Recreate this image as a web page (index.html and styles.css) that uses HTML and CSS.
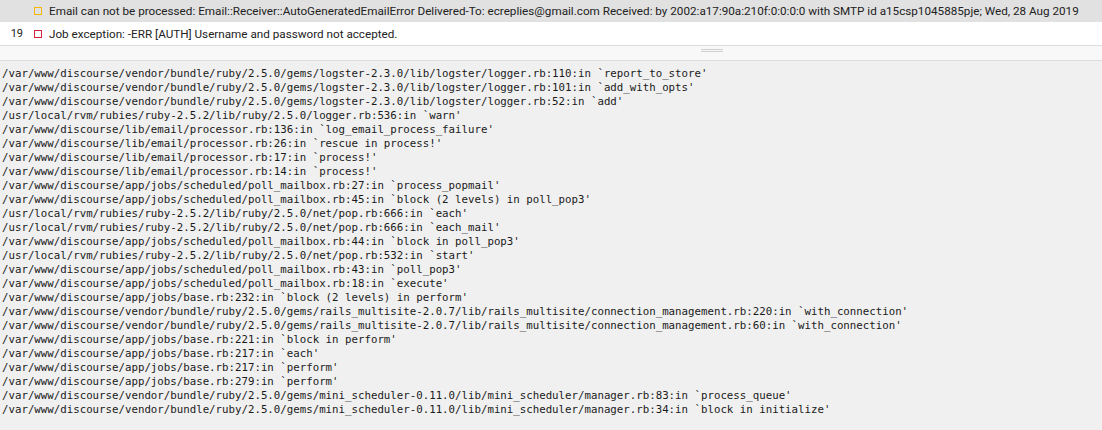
FILE: index.html
```html
<!DOCTYPE html>
<html>
<head>
<meta charset="utf-8">
<link rel="stylesheet" href="styles.css">
</head>
<body>
<div class="log-list">
  <div class="row selected">
    <span class="num"></span>
    <span class="sev warn"></span>
    <span class="msg">Email can not be processed: Email::Receiver::AutoGeneratedEmailError Delivered-To: ecreplies@gmail.com Received: by 2002:a17:90a:210f:0:0:0:0 with SMTP id a15csp1045885pje; Wed, 28 Aug 2019</span>
  </div>
  <div class="row">
    <span class="num">19</span>
    <span class="sev err"></span>
    <span class="msg">Job exception: -ERR [AUTH] Username and password not accepted.</span>
  </div>
</div>
<div class="divider"><span class="grip"></span></div>
<pre class="trace">/var/www/discourse/vendor/bundle/ruby/2.5.0/gems/logster-2.3.0/lib/logster/logger.rb:110:in `report_to_store'
/var/www/discourse/vendor/bundle/ruby/2.5.0/gems/logster-2.3.0/lib/logster/logger.rb:101:in `add_with_opts'
/var/www/discourse/vendor/bundle/ruby/2.5.0/gems/logster-2.3.0/lib/logster/logger.rb:52:in `add'
/usr/local/rvm/rubies/ruby-2.5.2/lib/ruby/2.5.0/logger.rb:536:in `warn'
/var/www/discourse/lib/email/processor.rb:136:in `log_email_process_failure'
/var/www/discourse/lib/email/processor.rb:26:in `rescue in process!'
/var/www/discourse/lib/email/processor.rb:17:in `process!'
/var/www/discourse/lib/email/processor.rb:14:in `process!'
/var/www/discourse/app/jobs/scheduled/poll_mailbox.rb:27:in `process_popmail'
/var/www/discourse/app/jobs/scheduled/poll_mailbox.rb:45:in `block (2 levels) in poll_pop3'
/usr/local/rvm/rubies/ruby-2.5.2/lib/ruby/2.5.0/net/pop.rb:666:in `each'
/usr/local/rvm/rubies/ruby-2.5.2/lib/ruby/2.5.0/net/pop.rb:666:in `each_mail'
/var/www/discourse/app/jobs/scheduled/poll_mailbox.rb:44:in `block in poll_pop3'
/usr/local/rvm/rubies/ruby-2.5.2/lib/ruby/2.5.0/net/pop.rb:532:in `start'
/var/www/discourse/app/jobs/scheduled/poll_mailbox.rb:43:in `poll_pop3'
/var/www/discourse/app/jobs/scheduled/poll_mailbox.rb:18:in `execute'
/var/www/discourse/app/jobs/base.rb:232:in `block (2 levels) in perform'
/var/www/discourse/vendor/bundle/ruby/2.5.0/gems/rails_multisite-2.0.7/lib/rails_multisite/connection_management.rb:220:in `with_connection'
/var/www/discourse/vendor/bundle/ruby/2.5.0/gems/rails_multisite-2.0.7/lib/rails_multisite/connection_management.rb:60:in `with_connection'
/var/www/discourse/app/jobs/base.rb:221:in `block in perform'
/var/www/discourse/app/jobs/base.rb:217:in `each'
/var/www/discourse/app/jobs/base.rb:217:in `perform'
/var/www/discourse/app/jobs/base.rb:279:in `perform'
/var/www/discourse/vendor/bundle/ruby/2.5.0/gems/mini_scheduler-0.11.0/lib/mini_scheduler/manager.rb:83:in `process_queue'
/var/www/discourse/vendor/bundle/ruby/2.5.0/gems/mini_scheduler-0.11.0/lib/mini_scheduler/manager.rb:34:in `block in initialize'</pre>
</body>
</html>
```
FILE: styles.css
```css
html, body {
  margin: 0;
  padding: 0;
  background: #f0f0f0;
  height: 100%;
}
body {
  font-family: Roboto, "Liberation Sans", sans-serif;
  color: #222;
  overflow: hidden;
}
.log-list {
  background: #fff;
}
.row {
  display: flex;
  align-items: center;
  height: 22px;
  font-size: 11.7px;
  color: #222;
  white-space: nowrap;
  overflow: hidden;
}
.row + .row {
  height: 23px;
  border-bottom: 1px solid #dcdcdc;
}
.row.selected {
  background: #e1e1e1;
}
.num {
  width: 23px;
  text-align: right;
  font-size: 11px;
  flex: none;
}
.sev {
  flex: none;
  box-sizing: border-box;
  width: 8px;
  height: 8px;
  margin-left: 11px;
  margin-right: 7px;
  border: 1px solid;
}
.sev.warn { border-color: #f5b700; }
.sev.err { border-color: #d0253a; }
.msg {
  flex: none;
}
.divider {
  height: 14px;
  background: #f8f8f8;
  border-bottom: 1px solid #dcdcdc;
  display: flex;
  align-items: flex-start;
  padding-left: 701px;
}
.grip {
  margin-top: 3px;
  width: 22px;
  height: 1px;
  border-top: 1px solid #cfcfcf;
  border-bottom: 1px solid #cfcfcf;
}
.trace {
  margin: 0;
  padding: 6px 0 0 2px;
  font-family: "DejaVu Sans Mono", "Liberation Mono", monospace;
  font-size: 10.75px;
  line-height: 14px;
  color: #1a1a1a;
  background: #f0f0f0;
}
```
